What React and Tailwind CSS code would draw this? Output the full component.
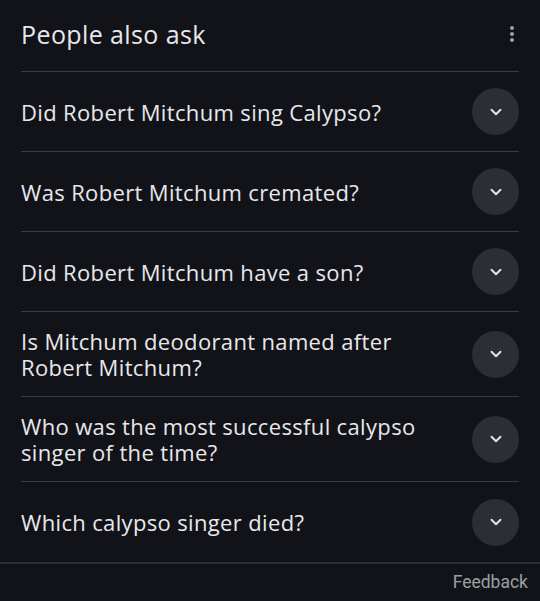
import React from 'react';

const questions = [
  'Did Robert Mitchum sing Calypso?',
  'Was Robert Mitchum cremated?',
  'Did Robert Mitchum have a son?',
  'Is Mitchum deodorant named after Robert Mitchum?',
  'Who was the most successful calypso singer of the time?',
  'Which calypso singer died?',
];

function Chevron() {
  return (
    <svg width="18" height="18" viewBox="0 0 24 24" fill="none">
      <path d="M6 9l6 6 6-6" stroke="#e3e3e8" strokeWidth="2.6" strokeLinecap="round" strokeLinejoin="round" />
    </svg>
  );
}

export default function App() {
  return (
    <div className="w-[540px] h-[601px] bg-[#121318] text-[#e8e8ec] font-['Open_Sans',sans-serif] flex flex-col overflow-hidden">
      <div className="px-[21px]">
        {/* Header */}
        <div className="h-[72px] flex items-center justify-between border-b border-[#3a3b40]">
          <h2 className="text-[25px] leading-[32px] tracking-[0.4px] pb-[3px]">People also ask</h2>
          <div className="flex flex-col gap-[2px] pr-[5px] pb-[4px]">
            <span className="w-[4px] h-[4px] rounded-full bg-[#9aa0a6]" />
            <span className="w-[4px] h-[4px] rounded-full bg-[#9aa0a6]" />
            <span className="w-[4px] h-[4px] rounded-full bg-[#9aa0a6]" />
          </div>
        </div>

        {/* Questions */}
        {questions.map((q, i) => (
          <div
            key={q}
            className={`flex items-center justify-between gap-6 ${q.length > 36 ? 'h-[85px]' : 'h-[80px]'} ${i < questions.length - 1 ? 'border-b border-[#3a3b40]' : ''}`}
          >
            <span className="text-[22px] leading-[26px] tracking-[0.35px] max-w-[425px]">{q}</span>
            <div className="w-[47px] h-[47px] shrink-0 rounded-full bg-[#2c2d35] flex items-center justify-center">
              <Chevron />
            </div>
          </div>
        ))}
      </div>

      {/* Footer */}
      <div className="border-t-2 border-[#2c2d33] flex justify-end items-center h-[40px] px-[12px]">
        <span className="text-[17.5px] text-[#9aa0a6] font-['Roboto',sans-serif] pb-[1px]">Feedback</span>
      </div>
    </div>
  );
}
